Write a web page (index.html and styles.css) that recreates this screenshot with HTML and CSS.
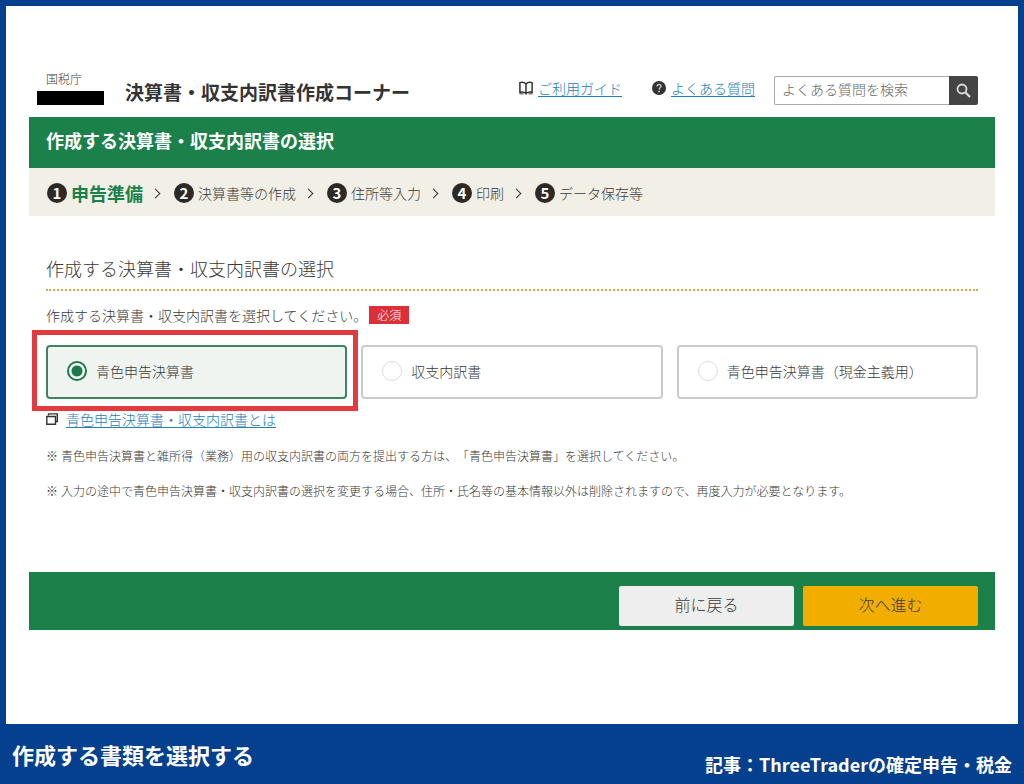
FILE: index.html
```
<!DOCTYPE html>
<html lang="ja">
<head>
  <meta charset="UTF-8">
  <meta name="viewport" content="width=device-width, initial-scale=1">
  <title>決算書・収支内訳書作成コーナー</title>
  <link rel="stylesheet" href="styles.css">
</head>
<body>

  <div class="panel">
    <header class="header">
      <div class="agency">
        <span class="agency-name">国税庁</span>
        <span class="agency-mask"></span>
      </div>
      <h1>決算書・収支内訳書作成コーナー</h1>

      <div class="header-tools">
        <div class="tool">
          <svg width="14" height="14" viewBox="0 0 14 14" fill="none" stroke="#333" stroke-width="1.5">
            <path d="M7 3C5.500 1.300 3 1 0.900 1.600V11.300C3 10.800 5.500 11 7 12.500C8.500 11 11 10.800 13.100 11.300V1.600C11 1 8.500 1.300 7 3ZM7 3V13.500" />
            <path d="M0.500 12.800H4.500M9.500 12.800H13.500" stroke-width="1" />
          </svg>
          <a href="#">ご利用ガイド</a>
        </div>
        <div class="tool">
          <svg width="14" height="14" viewBox="0 0 14 14">
            <circle cx="7" cy="7" r="7" fill="#333" />
            <path d="M5 5.400C5 2.800 9.200 2.900 9.100 5.300C9 6.800 7.100 6.700 7.100 8.500" fill="none" stroke="#ccc" stroke-width="1.300" />
            <circle cx="7.100" cy="10.400" r="0.900" fill="#ccc" />
          </svg>
          <a href="#">よくある質問</a>
        </div>
        <form class="search">
          <input type="text" placeholder="よくある質問を検索" aria-label="よくある質問を検索">
          <button type="button" aria-label="検索">
            <svg width="15" height="15" viewBox="0 0 15 15" fill="none" stroke="#ddd">
              <circle cx="6" cy="6" r="4.500" stroke-width="1.800" />
              <path d="M9.300 9.300L14 14" stroke-width="2.200" />
            </svg>
          </button>
        </form>
      </div>
    </header>

    <div class="page-title">作成する決算書・収支内訳書の選択</div>

    <ol class="steps">
      <li class="current"><span class="num">1</span>申告準備</li>
      <li><span class="num">2</span>決算書等の作成</li>
      <li><span class="num">3</span>住所等入力</li>
      <li><span class="num">4</span>印刷</li>
      <li><span class="num">5</span>データ保存等</li>
    </ol>

    <main class="content">
      <h2>作成する決算書・収支内訳書の選択</h2>

      <p class="question" id="question">作成する決算書・収支内訳書を選択してください。<span class="required">必須</span></p>

      <div class="options" role="radiogroup" aria-labelledby="question">
        <label class="option selected">
          <input type="radio" name="document" checked>
          青色申告決算書
        </label>
        <label class="option">
          <input type="radio" name="document">
          収支内訳書
        </label>
        <label class="option">
          <input type="radio" name="document">
          青色申告決算書（現金主義用）
        </label>
      </div>

      <div class="about">
        <svg width="12" height="12" viewBox="0 0 12 12" fill="none" stroke="#333">
          <path d="M2.500 2.500V0.900H11.300V8.500H10" stroke-width="1.400" />
          <path d="M0.800 3.500H9.500V11.200H0.800Z" fill="#fff" stroke-width="1.400" />
        </svg>
        <a href="#">青色申告決算書・収支内訳書とは</a>
      </div>

      <p class="note"><span>※</span>青色申告決算書と雑所得（業務）用の収支内訳書の両方を提出する方は、「青色申告決算書」を選択してください。</p>
      <p class="note"><span>※</span>入力の途中で青色申告決算書・収支内訳書の選択を変更する場合、住所・氏名等の基本情報以外は削除されますので、再度入力が必要となります。</p>
    </main>

    <div class="actions">
      <button type="button" class="back">前に戻る</button>
      <button type="button" class="next">次へ進む</button>
    </div>
  </div>

  <footer class="caption">
    <p class="caption-title">作成する書類を選択する</p>
    <p class="caption-source">記事：ThreeTraderの確定申告・税金</p>
  </footer>

</body>
</html>
```
FILE: styles.css
```
* {
  box-sizing: border-box;
}

body {
  margin: 0;
  padding: 6px 6px 0;
  min-height: 100vh;
  display: flex;
  flex-direction: column;
  background: #05408f;
  color: #3a3a3a;
  font-family: "Noto Sans CJK JP", sans-serif;
  font-size: 14px;
  font-weight: 300;
  line-height: 20px;
  text-spacing-trim: space-all;
}

h1, h2, p, ol {
  margin: 0;
  padding: 0;
}

a {
  color: #2580b8;
  text-underline-offset: 2px;
}

svg {
  flex: none;
}

button, input {
  font-family: inherit;
  font-weight: inherit;
}

.panel {
  flex: 1;
  padding: 63px 23px 0;
  background: #fff;
}

/* Header */
.header {
  display: flex;
  align-items: flex-start;
  height: 48px;
  padding: 0 17px 0 8px;
  white-space: nowrap;
}

.agency {
  width: 67px;
  margin-right: 21px;
}

.agency-name {
  display: block;
  padding: 0 0 2px 9px;
  font-size: 12px;
}

.agency-mask {
  display: block;
  height: 14px;
  background: #000;
}

h1 {
  padding-top: 11px;
  color: #333;
  font-size: 19px;
  font-weight: bold;
  line-height: 24px;
}

.header-tools {
  display: flex;
  align-items: flex-start;
  margin-left: auto;
  padding-top: 7px;
}

.tool {
  display: flex;
  align-items: center;
  gap: 5px;
  margin: 2px 30px 0 0;
}

.tool + .tool {
  margin-right: 19px;
}

.search {
  display: flex;
}

.search input {
  width: 175px;
  height: 29px;
  padding: 0 7px 3px;
  border: 1px solid #aaa;
  border-right: none;
  border-radius: 2px 0 0 2px;
  font-size: 14px;
}

.search input::placeholder {
  color: #666;
}

.search button {
  display: flex;
  align-items: center;
  justify-content: center;
  width: 29px;
  height: 29px;
  padding: 0;
  border: none;
  border-radius: 0 2px 2px 0;
  background: #444;
}

/* Title bar and steps */
.page-title {
  padding: 11px 17px 16px;
  background: #1b8049;
  color: #fff;
  font-size: 18px;
  font-weight: bold;
  line-height: 24px;
}

.steps {
  display: flex;
  align-items: center;
  height: 48px;
  padding: 2px 18px 0;
  background: #f2efe6;
  list-style: none;
}

.steps li {
  display: flex;
  align-items: center;
}

.steps li + li::before {
  content: "";
  width: 6px;
  height: 6px;
  margin: 0 15px 0 9px;
  border-top: 1px solid #333;
  border-right: 1px solid #333;
  transform: rotate(45deg);
}

.num {
  width: 20px;
  height: 20px;
  margin-right: 4px;
  border-radius: 50%;
  background: #2d2926;
  color: #fff;
  font-size: 15px;
  font-weight: bold;
  text-align: center;
}

.steps .current {
  color: #1b8049;
  font-size: 18px;
  font-weight: bold;
}

/* Form */
.content {
  padding: 40px 17px 71px;
}

h2 {
  padding-bottom: 9px;
  border-bottom: 2px dotted #e0a248;
  font-size: 18px;
  font-weight: 300;
  line-height: 24px;
}

.question {
  display: flex;
  align-items: center;
  padding: 14px 0 20px;
}

.required {
  margin-left: 2px;
  padding: 0 8px;
  background: #dc3038;
  color: #fff;
  font-size: 12px;
  line-height: 18px;
}

.options {
  display: grid;
  grid-template-columns: repeat(3, 1fr);
  gap: 14px;
}

.option {
  position: relative;
  display: flex;
  align-items: center;
  gap: 9px;
  height: 54px;
  padding: 0 19px 2px;
  border: 2px solid #ccc;
  border-radius: 4px;
}

.option.selected {
  border-color: #3f8562;
  background: #eff4f1;
}

/* Red frame round the option to choose */
.option.selected::after {
  content: "";
  position: absolute;
  top: -17px;
  right: -13px;
  bottom: -14px;
  left: -16px;
  border: 5px solid #e23b3f;
}

.option input {
  appearance: none;
  width: 20px;
  height: 20px;
  margin: 0;
  border: 1px solid #ddd;
  border-radius: 50%;
  background: #fff;
}

.option input:checked {
  border: 2px solid #1b7a4a;
  background: radial-gradient(circle, #1b7a4a 5px, #fff 6px);
}

.about {
  display: flex;
  align-items: center;
  gap: 8px;
  margin: 10px 0 17px;
}

.note {
  display: flex;
  font-size: 12px;
  line-height: 20px;
}

.note + .note {
  margin-top: 15px;
}

.note span {
  margin-right: 3px;
}

/* Buttons */
.actions {
  display: flex;
  justify-content: flex-end;
  gap: 9px;
  padding: 14px 17px 4px;
  background: #1b8049;
}

.actions button {
  width: 175px;
  height: 40px;
  padding: 0 0 5px;
  border: none;
  border-radius: 2px;
  background: #eee;
  color: #3a3a3a;
  font-size: 16px;
}

.actions .next {
  background: #f2ae00;
}

/* Caption */
.caption {
  display: flex;
  justify-content: space-between;
  height: 60px;
  padding: 0 6px;
  color: #fff;
  font-weight: bold;
}

.caption-title {
  padding-top: 15px;
  font-size: 22px;
  line-height: 30px;
}

.caption-source {
  padding-top: 28px;
  font-size: 18px;
  line-height: 24px;
}
```
